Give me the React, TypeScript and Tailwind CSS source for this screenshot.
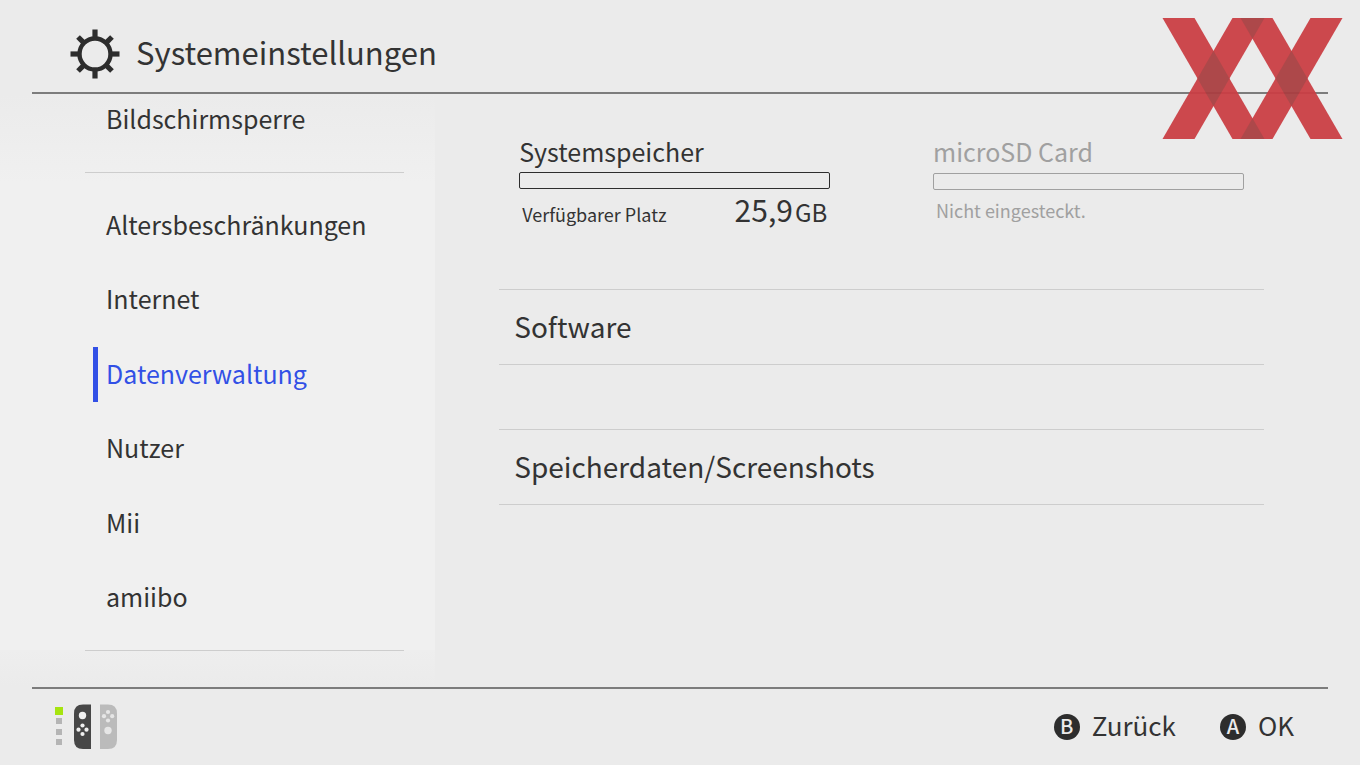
const menuItems = [
  { label: 'Altersbeschränkungen' },
  { label: 'Internet' },
  { label: 'Datenverwaltung', active: true },
  { label: 'Nutzer' },
  { label: 'Mii' },
  { label: 'amiibo' },
]

const dataSections = ['Software', 'Speicherdaten/Screenshots']

const gearAngles = [0, 45, 90, 135, 180, 225, 270, 315]

function GearIcon() {
  return (
    <svg viewBox="-25 -25 50 50" className="size-[50px] shrink-0" aria-hidden="true">
      <circle r="15.5" fill="none" stroke="#2d2d2d" strokeWidth="4.4" />
      {gearAngles.map((angle) => (
        <rect
          key={angle}
          x="-2.6"
          y={angle % 90 === 0 ? -24.5 : -24}
          width="5.2"
          height="8"
          fill="#2d2d2d"
          transform={`rotate(${angle})`}
        />
      ))}
    </svg>
  )
}

function BrandMark() {
  return (
    <svg viewBox="0 0 181 121" className="absolute top-[18px] right-[17px] w-[181px]" aria-hidden="true">
      <g opacity="0.94">
        <g fill="#cb3e44">
          <path d="M0.500 0H32.500L102.500 121H70.500Z" />
          <path d="M70.500 0H102.500L32.500 121H0.500Z" />
          <path d="M78.500 0H110.500L180.500 121H148.500Z" />
          <path d="M148.500 0H180.500L110.500 121H78.500Z" />
        </g>
        <g fill="#aa3e41">
          <path d="M51.500 32.800L67.500 60.500L51.500 88.200L35.500 60.500Z" />
          <path d="M129.500 32.800L145.500 60.500L129.500 88.200L113.500 60.500Z" />
          <path d="M78.500 0H102.500L90.500 20.700Z" />
          <path d="M78.500 121H102.500L90.500 100.300Z" />
        </g>
      </g>
    </svg>
  )
}

function ControllerStatus() {
  return (
    <svg viewBox="0 0 64 48" className="h-12 w-16" aria-hidden="true">
      <rect x="1" y="4" width="8" height="8" fill="#a6e40f" />
      <g fill="#b5b5b5">
        <rect x="2" y="15" width="6" height="6" />
        <rect x="2" y="26" width="6" height="6" />
        <rect x="2" y="36" width="6" height="6" />
      </g>
      <path d="M37 1.500V46H29Q20 46 20 37V10.500Q20 1.500 29 1.500Z" fill="#474747" />
      <path d="M46 1.500H54Q63 1.500 63 10.500V37Q63 46 54 46H46Z" fill="#bbbbbb" />
      <g fill="#f0f0f0">
        <circle cx="28.500" cy="12.500" r="3.700" />
        <circle cx="28.500" cy="22.500" r="2.100" />
        <circle cx="24.500" cy="26.700" r="2.100" />
        <circle cx="32.500" cy="26.700" r="2.100" />
        <circle cx="28.500" cy="31" r="2.100" />
      </g>
      <g fill="#e6e6e6">
        <circle cx="54" cy="9" r="2.100" />
        <circle cx="50" cy="13.200" r="2.100" />
        <circle cx="58.200" cy="13.200" r="2.100" />
        <circle cx="54" cy="17.500" r="2.100" />
        <circle cx="54" cy="27.500" r="3.700" />
      </g>
    </svg>
  )
}

function ActionButton({ letter, label }: { letter: string; label: string }) {
  return (
    <button type="button" className="flex items-center gap-3 text-[26px] leading-8">
      <span className="flex size-[26px] items-center justify-center rounded-full bg-[#2d2d2d] pb-0.5 text-xl leading-none font-medium text-[#ebebeb]">
        {letter}
      </span>
      <span className="pb-1">{label}</span>
    </button>
  )
}

export default function App() {
  return (
    <div className="relative flex min-h-screen flex-col bg-[#ebebeb] font-['Noto_Sans_CJK_JP','Noto_Sans',sans-serif] text-[#333333]">
      <header className="mx-8 flex h-[94px] items-center gap-4 border-b-2 border-[#7c7c7c] pt-4 pl-[38px]">
        <GearIcon />
        <h1 className="pb-1 text-[31px] leading-10">Systemeinstellungen</h1>
      </header>

      <main className="flex flex-1">
        {/* Category menu */}
        <nav className="flex w-[32%] flex-col bg-linear-to-b from-[#ebebeb] via-[#f0f0f0] via-15% to-[#f0f0f0] pr-[31px]">
          <button
            type="button"
            className="ml-[85px] h-[79px] border-b border-[#cdcdcd] pb-[31px] pl-[21px] text-left text-[25px] leading-8"
          >
            Bildschirmsperre
          </button>
          <ul className="ml-[85px] flex flex-1 flex-col py-[15px] pl-2">
            {menuItems.map((item) => (
              <li key={item.label} className="flex flex-1 items-center">
                <button
                  type="button"
                  aria-current={item.active ? 'page' : undefined}
                  className={`h-[55px] w-full border-l-[5px] pb-[3px] pl-2 text-left text-[25px] leading-8 ${
                    item.active ? 'border-[#3250e6] text-[#3250e6]' : 'border-transparent'
                  }`}
                >
                  {item.label}
                </button>
              </li>
            ))}
          </ul>
          {/* Lower edge fades back into the page */}
          <div className="-mr-[31px] h-[37px] bg-linear-to-b from-[#eeeeee] to-[#ebebeb] pr-[31px] pl-[85px]">
            <hr className="border-[#cdcdcd]" />
          </div>
        </nav>

        <section className="flex-1 pt-10 pr-24 pl-16">
          {/* Storage overview */}
          <div className="flex justify-between px-5">
            <div className="w-[311px]">
              <h2 className="pb-1 text-[25px] leading-[34px]">Systemspeicher</h2>
              <div className="h-[17px] rounded-xs border border-[#2d2d2d]" />
              <div className="flex items-baseline justify-between px-[3px]">
                <span className="text-lg">Verfügbarer Platz</span>
                <span className="text-[30px] leading-10">
                  25,9<span className="ml-0.5 text-2xl leading-none">GB</span>
                </span>
              </div>
            </div>
            <div className="w-[311px] text-[#a0a0a0]">
              <h2 className="pb-1 text-[25px] leading-[35px]">microSD Card</h2>
              <div className="h-[17px] rounded-xs border border-[#a0a0a0]" />
              <p className="px-[3px] pt-1.5 text-lg leading-7">Nicht eingesteckt.</p>
            </div>
          </div>

          <div className="mt-[60px] flex flex-col gap-16">
            {dataSections.map((label) => (
              <button
                key={label}
                type="button"
                className="h-[76px] border-y border-[#cdcdcd] pb-0.5 pl-[15px] text-left text-[28px] leading-9"
              >
                {label}
              </button>
            ))}
          </div>
        </section>
      </main>

      <footer className="mx-8 flex h-[78px] items-center justify-between border-t-2 border-[#7c7c7c] pr-[34px] pl-[22px]">
        <ControllerStatus />
        <div className="flex gap-11">
          <ActionButton letter="B" label="Zurück" />
          <ActionButton letter="A" label="OK" />
        </div>
      </footer>

      <BrandMark />
    </div>
  )
}
